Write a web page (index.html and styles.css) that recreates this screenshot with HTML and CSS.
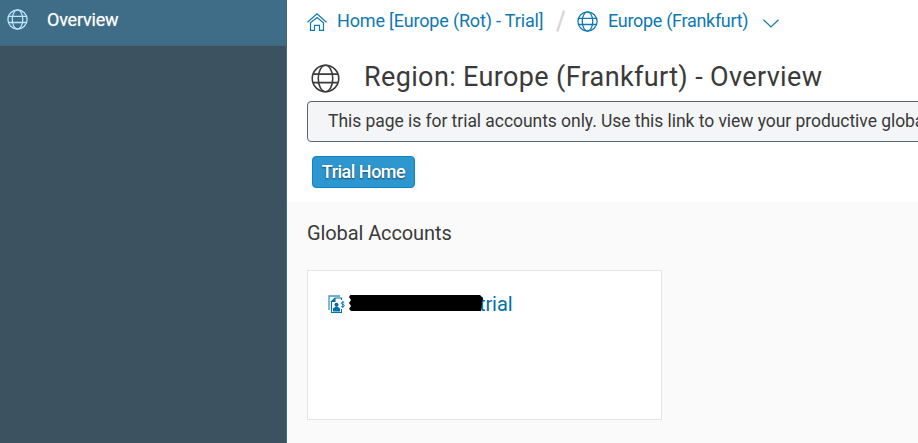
FILE: index.html
```html
<!DOCTYPE html>
<html lang="en">
<head>
<meta charset="utf-8">
<title>Region Overview</title>
<link rel="stylesheet" href="styles.css">
</head>
<body>
<svg class="defs" width="0" height="0" aria-hidden="true">
  <symbol id="globe" viewBox="0 0 28 28">
    <g fill="none" stroke="currentColor">
      <circle cx="14" cy="14" r="12.8"/>
      <ellipse cx="14" cy="14" rx="7" ry="12.8"/>
      <path d="M2 9.8H26M2 18H26"/>
    </g>
  </symbol>
</svg>
<div class="app">
  <nav class="sidebar">
    <a class="nav-item"><svg class="globe globe-nav"><use href="#globe"/></svg><span class="nav-label">Overview</span></a>
  </nav>
  <main class="main">
    <header class="header">
      <div class="crumbs">
        <svg class="home" viewBox="0 0 20 18" fill="none" stroke="currentColor"><path d="M.5 9.3L10 .8l9.500 8.500M3.500 9.800V17.400H7.500V12.400H12.500V17.400H16.500V9.800L10 4.600z" stroke-width="1.200"/></svg>
        <a class="crumb crumb-home">Home [Europe (Rot) - Trial]</a>
        <svg class="slash" viewBox="0 0 10 22"><path d="M1.200 21.500L8.200 .5" stroke="#d9d9d9" stroke-width="2.400"/></svg>
        <svg class="globe globe-crumb"><use href="#globe"/></svg>
        <a class="crumb crumb-region">Europe (Frankfurt)</a>
        <svg class="chevron" viewBox="0 0 16 9" fill="none" stroke="currentColor"><path d="M.5 .7L8 8 15.500 .7" stroke-width="1.200"/></svg>
      </div>
      <div class="title-row">
        <svg class="globe globe-title"><use href="#globe"/></svg>
        <h1 class="title">Region: Europe (Frankfurt) - Overview</h1>
      </div>
      <div class="notice"><span class="notice-text">This page is for trial accounts only. Use this link to view your productive global</span></div>
      <button class="button"><span>Trial Home</span></button>
    </header>
    <section class="accounts">
      <h2 class="subtitle">Global Accounts</h2>
      <article class="card">
        <svg class="account-icon" viewBox="0 0 17 19" fill="none" stroke="currentColor">
          <path d="M1 15V1H12" stroke-width="1.300" opacity=".75"/>
          <path d="M3.500 6.500V17.500H13.500V14M13.500 5V3H7L3.500 6.500H7V3" stroke-width="1.100"/>
          <path d="M3.500 6.500L7 3v3.500zM5 16.500v-3l2-1.500h3l2 1.500v3z" fill="currentColor" stroke="none"/>
          <circle cx="8.500" cy="9.800" r="2.100" fill="currentColor" stroke="none"/>
          <path d="M16.300 7.700c-.7-.9-3-.8-3 .6 0 1.500 3 .8 3 2.300 0 1.400-2.300 1.500-3.200.5M14.800 6v7" stroke-width=".9"/>
        </svg>
        <span class="redaction"></span>
        <a class="account-name">trial</a>
      </article>
    </section>
  </main>
</div>
</body>
</html>
```
FILE: styles.css
```css
* { box-sizing: border-box; }
body { margin: 0; overflow: hidden; font-family: Roboto, sans-serif; background: #fff; color: #3a3a3a; }
.defs { position: absolute; }
svg { display: block; flex: none; }
.app { display: flex; height: 443px; }
.sidebar { flex: 0 0 287px; min-width: 0; background: #3c5260; border-right: 1px solid #3f6b86; }
.nav-item { display: flex; align-items: center; height: 46px; padding: 0 0 6px 7px; background: #3f6d88; border-bottom: 1px solid #44677b; color: #fff; }
.nav-label { margin-left: 19px; font-size: 18px; line-height: 24px; letter-spacing: -0.2px; text-shadow: 0 0 1px #fff8; white-space: nowrap; }
.globe { stroke-width: 1.7; }
.globe-nav { width: 21px; height: 21px; color: #bde5ff; }
.main { flex: 1; min-width: 0; overflow: hidden; background: #fafafa; }
.header { height: 202px; padding: 8px 0 0 20px; background: #fff; }
.crumbs { display: flex; align-items: center; height: 26px; color: #0d79b3; }
.home { width: 20px; height: 18px; margin-top: 1px; }
.crumb { margin-top: -1px; font-size: 18px; line-height: 25px; white-space: nowrap; }
.crumb-home { width: 207px; margin-left: 10px; letter-spacing: -0.16px; }
.slash { width: 10px; height: 22px; margin-left: 12px; }
.globe-crumb { width: 21px; height: 21px; margin: 1px 0 0 11px; }
.crumb-region { width: 141px; margin-left: 10px; letter-spacing: -0.3px; }
.chevron { width: 16px; height: 9px; margin: 4px 0 0 14px; }
.title-row { display: flex; align-items: center; height: 67px; padding: 22px 0 0 4px; }
.globe-title { width: 29px; height: 29px; margin-top: -1px; stroke-width: 1.5; }
.title { margin: -3px 0 0 24px; font-size: 27px; line-height: 34px; font-weight: 400; letter-spacing: 0.36px; white-space: nowrap; }
.notice { display: flex; align-items: center; height: 41px; width: 760px; padding: 0 0 1px 20px; border: 1px solid #5b6570; border-radius: 4px; background: #f4f5f7; }
.notice-text { font-size: 17.500px; letter-spacing: -0.05px; white-space: nowrap; }
.button { display: flex; align-items: center; justify-content: center; width: 103px; height: 32px; margin: 14px 0 0 5px; padding: 0 0 1px; border: 1px solid #0a85ca; border-radius: 4px; background: #2f97cf; color: #fff; font-family: inherit; font-size: 18px; font-weight: 500; letter-spacing: -0.5px; text-shadow: 0 1px 2px #0008; white-space: nowrap; }
.accounts { padding: 18px 0 0 20px; }
.subtitle { margin: 0; font-size: 20px; line-height: 26px; font-weight: 400; letter-spacing: -0.1px; }
.card { display: flex; align-items: flex-start; width: 355px; height: 150px; margin-top: 24px; padding: 20px 0 0 20px; border: 1px solid #e4e4e4; background: #fff; color: #0070a8; }
.account-icon { width: 17px; height: 19px; margin-top: 4px; }
.redaction { width: 134px; height: 16px; margin: 4px 0 0 4px; background: #000; border-radius: 2px; clip-path: polygon(1px 0, 131px 0, 134px 3px, 133px 8px, 132px 16px, 2px 16px, 0 14px, 2px 11px, 0 8px, 2px 5px, 0 2px); z-index: 1; }
.account-name { margin-left: -4px; font-size: 20px; line-height: 26px; letter-spacing: -0.1px; }
```
